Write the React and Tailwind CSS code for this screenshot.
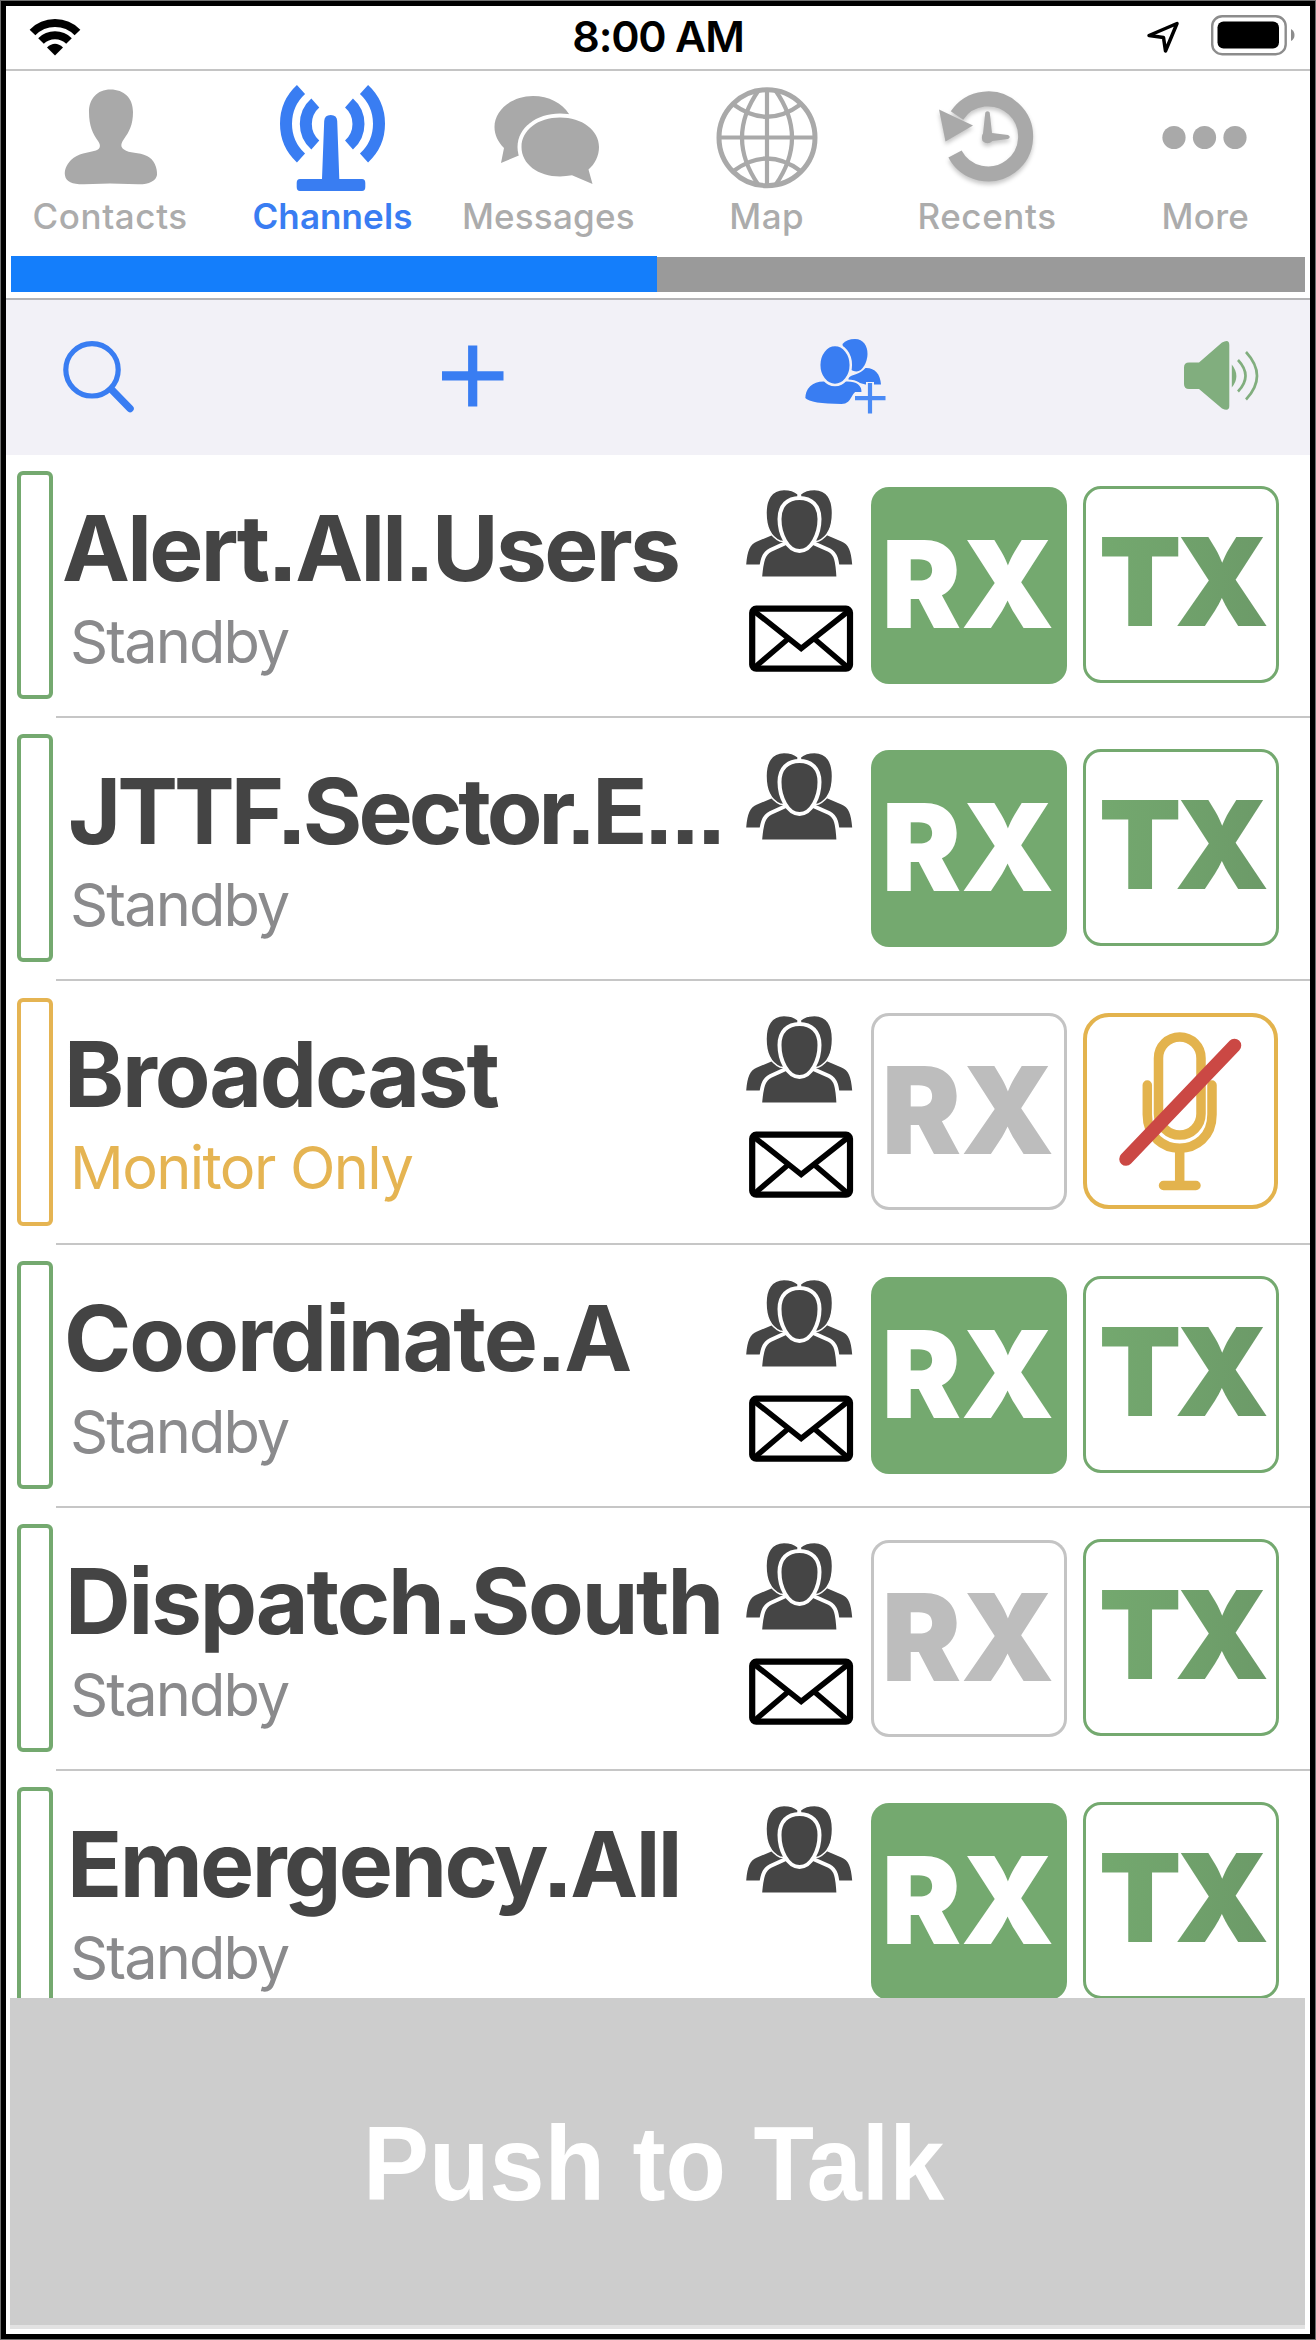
import React from "react";

const BLUE = "#397df2";
const GRAY = "#a9a9a9";
const TOOLBAR = "#f2f1f7";

/* ---------- status bar icons ---------- */

const WifiIcon = () => (
  <svg className="h-[40px] w-[54px]" viewBox="28 16 54 40" fill="none" stroke="#000">
    <path d="M32.5 32.5 A31.5 31.5 0 0 1 77.500 32.500" strokeWidth="8" />
    <path d="M41 41 A20 20 0 0 1 69 41" strokeWidth="8" />
    <path d="M55 55.500 L47 47.500 Q55 40 63 47.500 Z" fill="#000" stroke="none" />
  </svg>
);

const LocationIcon = () => (
  <svg className="h-[36px] w-[36px]" viewBox="1145 19 36 36" fill="none">
    <path d="M1149 35.500 L1177 23.500 L1165.500 51 L1163.500 37.500 Z" stroke="#000" strokeWidth="3.500" strokeLinejoin="round" />
  </svg>
);

const BatteryIcon = () => (
  <svg className="h-[42px] w-[86px]" viewBox="1210 14 86 42" fill="none">
    <rect x="1212.200" y="16.200" width="73.500" height="38" rx="10" stroke="#8c8c8c" strokeWidth="2.400" />
    <rect x="1217.500" y="21.500" width="61.500" height="27" rx="6" fill="#000" />
    <path d="M1291 29 Q1294.500 31 1294.500 35 Q1294.500 39 1291 41 Z" fill="#8c8c8c" />
  </svg>
);

/* ---------- tab icons, all 106 px high ---------- */

const ContactsIcon = () => (
  <svg className="h-[106px] w-[106px]" viewBox="57 85 106 106" fill={GRAY}>
    <path d="M110.500 89.500 C97 89.500 89 99 89 112 C89 126 93 134 98 141 C101 145 100.500 149 96 150.500 C88 153 78 153 71 160 C66 165 64 171 65 175.500 C66 182 73 184.500 84 184.300 L110 183.500 L138 184.300 C149 184.500 156 181 157 175 C157.500 168 154 159 147 156 C139 152 129 153.500 124 149.500 C120 147 121 143 124 139 C129 132 133 125 133 112 C133 98 124 89.500 110.500 89.500 Z" />
  </svg>
);

const ChannelsIcon = () => (
  <svg className="h-[108px] w-[108px]" viewBox="279 85 108 108" fill="none" stroke={BLUE} strokeWidth="12">
    <path d="M302 89.500 A46.600 46.600 0 0 0 302 158" />
    <path d="M316.300 103 A28 28 0 0 0 316.300 145" />
    <path d="M365 89.500 A46.600 46.600 0 0 1 365 158" />
    <path d="M350 103 A28 28 0 0 1 350 145" />
    <path d="M331.700 115 Q338 115 338.200 121 L340.300 179 H363 Q366.300 179 366.300 183 V187 Q366.300 191 363 191 H301 Q297.700 191 297.700 187 V183 Q297.700 179 301 179 H323 L325.200 121 Q325.500 115 331.700 115 Z" fill={BLUE} stroke="none" />
  </svg>
);

const MessagesIcon = () => (
  <svg className="h-[106px] w-[108px]" viewBox="494 85 108 106" fill={GRAY}>
    <path d="M533 96 C512 96 494.500 110 494.500 127 C494.500 135 498 142 504 148 L501 163 L520 155 L560 150 L569 114 C562 103 549 96 533 96 Z" />
    <path d="M560 113.500 C536 113.500 517.500 128 517.500 147 C517.500 166 536 180.500 560 180.500 C584 180.500 603 166 603 147 C603 128 584 113.500 560 113.500 Z" fill="#fff" />
    <path d="M560 117.500 C538 117.500 521.500 130 521.500 147 C521.500 164 538 176.500 560 176.500 C564 176.500 568 176 572 175.300 L592.500 184 L588.500 169.500 C595 164 599 156 599 147 C599 130 582 117.500 560 117.500 Z" />
  </svg>
);

const MapIcon = () => (
  <svg className="h-[106px] w-[106px]" viewBox="713.500 85 106 106" fill="none" stroke={GRAY} strokeWidth="4.200">
    <circle cx="766.500" cy="137.700" r="48" strokeWidth="5" />
    <path d="M766.500 90 V186 M718 137.500 H815" />
    <path d="M758 90.500 Q725 137.500 758 185 M775 90.500 Q808 137.500 775 185" />
    <path d="M733 104.500 Q766.500 129 800 104.500 M733 171 Q766.500 146 800 171" />
  </svg>
);

const RecentsIcon = () => (
  <svg className="h-[106px] w-[106px] drop-shadow-[0_3px_2px_rgba(0,0,0,0.22)]" viewBox="934 84.500 106 106" fill="none">
    <path d="M955 153.500 A37.500 37.500 0 1 0 957 115" stroke={GRAY} strokeWidth="15" />
    <path d="M939 109 L973 125 L945.500 141 Z" fill={GRAY} />
    <path d="M985.300 112 Q987.500 109.500 989.700 112 L992 132.500 L1008 134.500 Q1011.500 136.500 1008 138.500 L992.500 140.500 Q987.500 145 982.500 140.500 Q981 136 983 133 Z" fill={GRAY} />
  </svg>
);

const MoreIcon = () => (
  <svg className="h-[106px] w-[106px]" viewBox="1152.500 85 106 106" fill={GRAY}>
    <circle cx="1174.500" cy="137.500" r="11.600" />
    <circle cx="1205" cy="137.500" r="11.600" />
    <circle cx="1235.500" cy="137.500" r="11.600" />
  </svg>
);

/* ---------- toolbar icons ---------- */

const SearchIcon = () => (
  <svg className="h-[76px] w-[76px]" viewBox="61 338 76 76" fill="none" stroke={BLUE}>
    <circle cx="92" cy="369.800" r="26.200" strokeWidth="5.200" />
    <path d="M111.500 389.500 L130 408.500" strokeWidth="7.500" strokeLinecap="round" />
  </svg>
);

const PlusIcon = () => (
  <svg className="h-[64px] w-[64px]" viewBox="441 344.500 64 64" stroke={BLUE} strokeWidth="9.200">
    <path d="M472.700 346 V407 M442 376.300 H503.500" />
  </svg>
);

const AddGroupIcon = () => (
  <svg className="h-[78px] w-[86px]" viewBox="801.500 337 86 78" fill={BLUE}>
    <path d="M843 344 C846 340.500 850 339 855.500 339 C864 339 868 346 868 354 C868 362 863 371.500 857 371.500 C852 371.500 848 368 845 360 Z" />
    <path d="M849 378 C852 374 860 375 866 368 C875 367.500 881 374 881.500 384.500 H866 L849 380 Z" />
    <path d="M824 380.500 C812 380.500 805 388 804.800 398.500 C810 404 825 405 842 405 C852 405 852 396 856 393 H863 C863.500 384 857 380.500 848 380.500 Z" stroke={TOOLBAR} strokeWidth="2" />
    <ellipse cx="835.500" cy="365" rx="15.800" ry="20" stroke={TOOLBAR} strokeWidth="2.500" />
    <path d="M870.500 382 V414 M855 398.200 H886.500" stroke={TOOLBAR} strokeWidth="8" />
    <path d="M870.500 383 V413.500 M855.500 398.200 H886" stroke="#4a8af5" strokeWidth="4.200" />
  </svg>
);

const SpeakerIcon = () => (
  <svg className="h-[74px] w-[78px]" viewBox="1182 339 78 74" fill="#81ae7e">
    <path d="M1189 362.500 H1199 L1222 342.500 Q1229.300 338.500 1229.300 345 V406 Q1229.300 412 1222 408.500 L1199 389 H1189 Q1184 389 1184 384 V367.500 Q1184 362.500 1189 362.500 Z" />
    <path d="M1231.800 364.500 Q1241 376 1231.800 387.500 Z" />
    <path d="M1238 360 Q1253 376 1238 391.500 M1246 352 Q1268 376 1246 399.500" fill="none" stroke="#81ae7e" strokeWidth="2.600" />
  </svg>
);

/* ---------- channel row icons ---------- */

const PeopleIcon = () => (
  <svg className="block h-[90px] w-[112px]" viewBox="744 489 112 90" fill="#454545" stroke="#fff">
    <path d="M746.200 565.500 C747.500 551 750 545.500 757 542.500 L775 535 L790 550 L768 556 L761 565.500 Z" stroke="none" />
    <path d="M852.200 565.500 C851 551 848.500 545.500 841.500 542.500 L824 535 L808 550 L831 556 L837.500 565.500 Z" stroke="none" />
    <path d="M798 495 C794 491.500 789 490.500 784 490.500 C771 490.500 766 501 766 514 C766 528 771 538 780 542 L799 545 Z" strokeWidth="1.500" />
    <path d="M800.500 495 C804.500 491.500 809.500 490.500 814.500 490.500 C827.500 490.500 832.500 501 832.500 514 C832.500 528 827.500 538 818.500 542 L799.500 545 Z" strokeWidth="1.500" />
    <path d="M760 579.500 C761.500 561 763.500 554.500 770.500 551 L787 543.500 H812 L829 551 C836 554.500 837.500 561 838.500 579.500 Z" strokeWidth="4" />
    <path d="M799.500 499 C787.500 499 779.500 506.500 779.500 520 C779.500 535 787.500 552 799.500 552 C811.500 552 819.500 535 819.500 520 C819.500 506.500 811.500 499 799.500 499 Z" strokeWidth="4" />
  </svg>
);

const EnvelopeIcon = () => (
  <svg className="block h-[70px] w-[112px]" viewBox="744 604 112 70" fill="none" stroke="#000" strokeWidth="6.200">
    <rect x="752.200" y="608.700" width="97.800" height="60" rx="4" />
    <path d="M754 611 L801.200 648.500 L848.500 611 M754 668 L788.500 638.500 M848.500 668 L814 638.500" strokeWidth="5.500" />
  </svg>
);

const MutedMicIcon = () => (
  <svg className="h-[164px] w-[124px]" viewBox="1119 1029.500 124 164" fill="none" stroke="#e3b34d" strokeWidth="9.500" strokeLinecap="round">
    <rect x="1158.500" y="1037.500" width="42.500" height="98" rx="21.200" />
    <path d="M1147.300 1085.500 V1115 C1147.300 1160 1212 1160 1212 1115 V1085.500" />
    <path d="M1179.700 1150 V1185 M1163.500 1186 H1196" />
    <path d="M1126 1159.500 L1234.500 1046" stroke="#cb4844" strokeWidth="13.500" />
  </svg>
);

/* ---------- data ---------- */

const tabs = [
  { label: "Contacts", Icon: ContactsIcon, cls: "font-medium tracking-[0.6px] text-[#acacac] pl-px" },
  { label: "Channels", Icon: ChannelsIcon, cls: "font-semibold tracking-[0.1px] text-[#397df2] pl-[7px]" },
  { label: "Messages", Icon: MessagesIcon, cls: "font-medium tracking-[0.2px] text-[#acacac]" },
  { label: "Map", Icon: MapIcon, cls: "font-medium tracking-[0.4px] text-[#acacac] pr-[2px]" },
  { label: "Recents", Icon: RecentsIcon, cls: "font-medium tracking-[0.6px] text-[#acacac]" },
  { label: "More", Icon: MoreIcon, cls: "font-medium tracking-[0.3px] text-[#acacac] pr-[2px]" },
];

const channels = [
  { name: "Alert.All.Users", cls: "pl-[6px] tracking-[-2.7px]", mail: true, rx: true },
  { name: "JTTF.Sector.E...", cls: "pl-[12px] tracking-[-4px]", mail: false, rx: true },
  { name: "Broadcast", cls: "pl-[8px] tracking-[-2.2px]", mail: true, rx: false, monitor: true },
  { name: "Coordinate.A", cls: "pl-[8px] tracking-[-2px]", mail: true, rx: true },
  { name: "Dispatch.South", cls: "pl-[9px] tracking-[-2.2px]", mail: true, rx: false },
  { name: "Emergency.All", cls: "pl-[11px] tracking-[-2.6px]", mail: false, rx: true },
];

/* ---------- components ---------- */

const StatusBar = () => (
  <header className="grid h-[71px] grid-cols-3 items-start border-b-2 border-[#c4c4c4]">
    <div className="pt-[16px] pl-[28px]">
      <WifiIcon />
    </div>
    <p className="pt-[15px] text-center text-[43px] leading-[43px] font-semibold tracking-[-1.2px] text-black">8:00 AM</p>
    <div className="flex justify-end pt-[14px] pr-[20px]">
      <div className="pt-[5px] pr-[29px]">
        <LocationIcon />
      </div>
      <BatteryIcon />
    </div>
  </header>
);

const TabBar = () => (
  <nav className="grid h-[185px] grid-cols-6">
    {tabs.map(({ label, Icon, cls }) => (
      <a key={label} className={`flex flex-col items-center pt-[14px] text-[35px] leading-[40px] ${cls}`}>
        <span className="flex h-[106px] shrink-0 justify-center">
          <Icon />
        </span>
        <span className="mt-[5px]">{label}</span>
      </a>
    ))}
  </nav>
);

const Toolbar = () => (
  <div className="flex h-[157px] shrink-0 items-start border-t-2 border-[#b4b4b6] bg-[#f2f1f7]">
    <button className="mt-[38px] ml-[61px]"><SearchIcon /></button>
    <button className="mt-[44px] ml-[304px]"><PlusIcon /></button>
    <button className="mt-[37px] ml-[296px]"><AddGroupIcon /></button>
    <button className="mt-[39px] ml-[295px]"><SpeakerIcon /></button>
  </div>
);

const RxButton = ({ on }) => (
  <button
    className={
      on
        ? "flex h-[197px] w-[196px] justify-center rounded-[18px] bg-[#74a96f] text-white"
        : "flex h-[197px] w-[196px] justify-center rounded-[18px] bg-white text-[#bdbdbd] shadow-[inset_0_0_0_3px_#c4c4c4]"
    }
  >
    <span className="mt-[37px] mr-[3px] inline-block scale-x-[0.98] text-[121px] leading-[121px] font-black">RX</span>
  </button>
);

const TxButton = () => (
  <button className="-mt-px flex h-[197px] w-[196px] justify-center rounded-[18px] border-[3px] border-[#74a96f] bg-white">
    <span className="mt-[31px] inline-block scale-x-[0.98] bg-gradient-to-r from-[#74a96f] to-[#6c9a68] bg-clip-text px-[6px] text-[123px] leading-[123px] font-black tracking-[-7px] text-transparent">TX</span>
  </button>
);

const MutedButton = () => (
  <button className="flex h-[196px] w-[195px] justify-center rounded-[26px] border-4 border-[#e3b34d] bg-white pt-[12px]">
    <MutedMicIcon />
  </button>
);

const ChannelRow = ({ name, cls, mail, rx, monitor }) => (
  <li className="flex h-[263.2px] shrink-0">
    <span
      className={
        monitor
          ? "mt-[17px] mr-[3px] ml-[17px] h-[228px] w-[36px] rounded-[6px] border-4 border-[#e5b452]"
          : "mt-[16px] mr-[3px] ml-[17px] h-[228px] w-[36px] rounded-[6px] border-4 border-[#74a96f]"
      }
    />
    <div className="flex flex-1 border-b-2 border-[#c6c6c6]">
      <div className="w-[688px] pt-[48px] whitespace-nowrap">
        <h2 className={`text-[91px] leading-[91px] font-bold text-[#444] [font-feature-settings:'ss07'] ${cls}`}>{name}</h2>
        <p
          className={
            monitor
              ? "mt-[17px] pl-[14px] text-[59.5px] leading-[60px] tracking-[-1.6px] text-[#e5b452]"
              : "mt-[17px] pl-[14px] text-[59.5px] leading-[60px] tracking-[-1.9px] text-[#8a8a8c]"
          }
        >
          {monitor ? "Monitor Only" : "Standby"}
        </p>
      </div>
      <div className="w-[127px] pt-[33px]">
        <PeopleIcon />
        {mail && (
          <div className="mt-[26px]">
            <EnvelopeIcon />
          </div>
        )}
      </div>
      <div className="flex gap-[16px] pt-[32px]">
        <RxButton on={rx} />
        {monitor ? <MutedButton /> : <TxButton />}
      </div>
    </div>
  </li>
);

export default function App() {
  return (
    <div className="relative flex h-[2340px] w-[1316px] flex-col overflow-hidden bg-white font-[Inter,sans-serif]">
      <StatusBar />
      <TabBar />
      <div className="mr-[11px] ml-[11px] flex h-[36px] shrink-0">
        <div className="w-[646px] bg-[#147efb]" />
        <div className="mt-px flex-1 bg-[#9a9a9a]" />
      </div>
      <div className="h-[6px] shrink-0" />
      <Toolbar />
      <ul className="flex h-[1543px] shrink-0 flex-col overflow-hidden">
        {channels.map((c) => (
          <ChannelRow key={c.name} {...c} />
        ))}
      </ul>
      <button className="mr-[11px] ml-[10px] flex h-[331px] shrink-0 items-start justify-center border-b-4 border-[#e2e2e2] bg-[#cdcdcd]">
        <span className="mt-[113px] mr-[8px] inline-block scale-x-[0.93] font-['Liberation_Sans'] text-[106.5px] leading-[106px] font-bold whitespace-nowrap text-white">
          Push to Talk
        </span>
      </button>
      <div className="pointer-events-none absolute inset-0 border border-[#6f6f6f]">
        <div className="h-full w-full border-[5px] border-black" />
      </div>
    </div>
  );
}
